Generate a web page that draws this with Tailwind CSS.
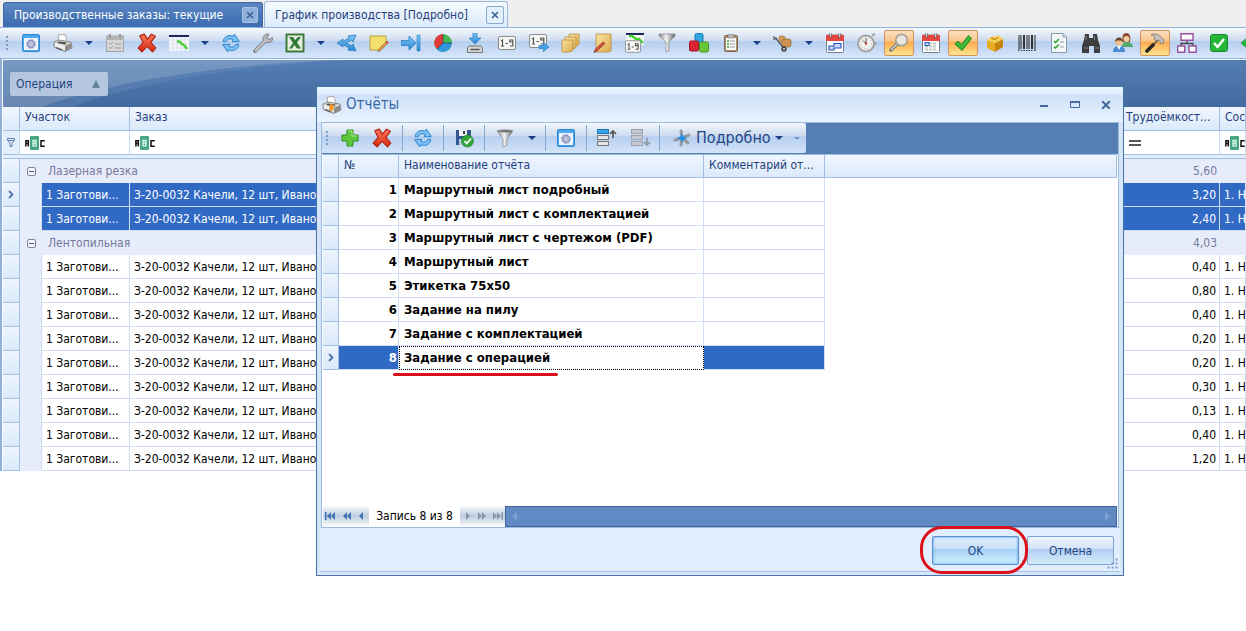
<!DOCTYPE html>
<html lang="ru">
<head>
<meta charset="utf-8">
<title>График производства</title>
<script src="https://cdn.jsdelivr.net/npm/@tailwindcss/browser@4"></script>
</head>
<body class="relative min-h-screen overflow-hidden bg-white font-['DejaVu_Sans_Condensed','DejaVu_Sans',sans-serif] text-[12px] text-black">
<svg class="absolute size-0" aria-hidden="true">
  <defs>
    <linearGradient id="steel" x1="0" x2="1"><stop offset="0" stop-color="#888"/><stop offset=".45" stop-color="#f4f4f4"/><stop offset="1" stop-color="#666"/></linearGradient>
    <linearGradient id="redg" x1="0" y1="0" x2="0" y2="1"><stop offset="0" stop-color="#ff7a5c"/><stop offset="1" stop-color="#d42a10"/></linearGradient>
    <linearGradient id="sky" x1="0" y1="0" x2="0" y2="1"><stop offset="0" stop-color="#7cc8f8"/><stop offset="1" stop-color="#2a86cf"/></linearGradient>
    <linearGradient id="gold" x1="0" y1="0" x2="1" y2="1"><stop offset="0" stop-color="#fbe5a2"/><stop offset="1" stop-color="#dca94e"/></linearGradient>
    <symbol id="settings" viewBox="0 0 18 18"><rect x=".5" y=".5" width="17" height="17" rx="1.5" fill="#4aa8ee" stroke="#2f86cf"/><rect x="2" y="4" width="14" height="12" fill="#eef3fb"/><circle cx="9" cy="10" r="3.600" fill="#b9bedc" stroke="#8d93c0" stroke-width="1.4"/><circle cx="9" cy="10" r="4.500" fill="none" stroke="#8d93c0" stroke-width="1" stroke-dasharray="1.500 2"/><circle cx="9" cy="10" r="1.2" fill="#fff" stroke="#8a90bd" stroke-width=".6"/></symbol>
    <symbol id="printer" viewBox="0 0 20 18"><path d="M5 1l7-.5 2 7-8 1z" fill="#fff" stroke="#999" stroke-width=".8"/><path d="M1 8l5-2 12 2 1 6-7 3.500L1 13z" fill="#d6d6d0" stroke="#777" stroke-width=".8"/><path d="M2 9l10 3v4L2 13z" fill="#f0f0ee"/><path d="M12 12l6.500-3v5L12 17z" fill="#8b8b8d"/><path d="M5.500 7.500l8 1-1 2-8-1.500z" fill="#4a4a4a"/><path d="M4 13l6 2.500-2 1-6-2.500z" fill="#666"/></symbol>
    <symbol id="redx" viewBox="0 0 18 18"><path d="M2.500 2.500l4-1.500 3 4.500L13 1l3.500 2-4 5.500 4.500 5-3 3.500-5-5-4.500 5L1 13.500l4.500-5z" fill="url(#redg)" stroke="#b02010" stroke-width="1" stroke-linejoin="round"/></symbol>
    <symbol id="refresh" viewBox="0 0 18 18"><path d="M2 8C2 3.500 7 1 11 3l1-2 4.500 6.500L10 8l1-2C8 4.500 5.500 5.500 4.500 8z" fill="#7cc0f4" stroke="#2f86cf" stroke-width=".9"/><path d="M16 10c0 4.500-5 7-9 5l-1 2-4.500-6.500L8 10l-1 2c3 1.500 5.500.5 6.500-2z" fill="#7cc0f4" stroke="#2f86cf" stroke-width=".9"/></symbol>
    <symbol id="calred" viewBox="0 0 18 20"><rect x=".5" y="2" width="17" height="17.500" rx="1" fill="#fff" stroke="#777b88"/><path d="M0 2h18v6H0z" fill="#e8453c"/><path d="M4.500 0v5M13.500 0v5" stroke="#666" stroke-width="2"/><path d="M4.500 0v4M13.500 0v4" stroke="#eee" stroke-width=".8"/></symbol>
    <symbol id="tag19" viewBox="0 0 18 14"><rect x=".5" y=".5" width="17" height="13" rx="1.500" fill="#f7f7f5" stroke="#8b8b88"/><path d="M3 5l1.500-1v6M3 10h3M7.500 7.500h2.500M14.800 6h-3V4h3v6h-3" fill="none" stroke="#555" stroke-width="1.200"/></symbol>
    <symbol id="funnel" viewBox="0 0 18 18"><path d="M1 2c3-1.500 13-1.500 16 0l-6 8v6l-4 2v-8z" fill="url(#steel)" stroke="#888" stroke-width=".7"/><ellipse cx="9" cy="2.200" rx="7" ry="1.200" fill="#777"/></symbol>
    <symbol id="abc" viewBox="0 0 20 14"><rect x="5" y="0" width="9" height="14" rx="1" fill="#4aa583"/><path d="M.9 10.500V4.700h2.400v5.800M.9 7.500h2.400M19 5.600V4.700h-3v5.600h3v-.9" fill="none" stroke="#111" stroke-width="1.500"/><path d="M8 4.500h3v5.400H8zM8 7.200h3" fill="none" stroke="#d9fff0" stroke-width="1.300"/></symbol>
    <symbol id="minus" viewBox="0 0 9 9"><rect x=".5" y=".5" width="8" height="8" rx="1.500" fill="#f3f5fb" stroke="#7b86a5"/><path d="M2 4.500h5" stroke="#4d5878"/></symbol>
    <symbol id="down" viewBox="0 0 8 4"><path d="M0 0h8L4 4z" fill="currentColor"/></symbol>
    <symbol id="chev" viewBox="0 0 6 9"><path d="M1 1l3.500 3.500L1 8" fill="none" stroke="#4f73a8" stroke-width="1.800"/></symbol>
    <symbol id="close" viewBox="0 0 8 8"><path d="M1 1l6 6M7 1L1 7" stroke="currentColor" stroke-width="1.600"/></symbol>
  </defs>
</svg>

<nav class="flex h-[27px] items-end bg-[#efefef] pl-[3px]" aria-label="Вкладки">
  <div class="flex h-[25px] w-[260px] items-center justify-between rounded-t-[3px] border border-b-0 border-[#3c67a5] bg-linear-to-b from-[#5b86c2] to-[#3b6bb0] pr-1 pl-[10px] text-white">
    <a href="#orders" class="whitespace-nowrap">Производственные заказы: текущие</a>
    <button class="grid size-4 place-items-center rounded-[2px] border border-[#a9c1e2] bg-[#8fb0dc] text-[#3c5f94]" aria-label="Закрыть"><svg class="size-2"><use href="#close"/></svg></button>
  </div>
  <div class="ml-px flex h-[26px] w-[244px] items-center justify-between rounded-t-[3px] border border-b-0 border-[#9ab8dd] bg-linear-to-b from-[#f5fafe] to-[#dceafb] pr-[3px] pl-[10px] text-[#1f3f7c]">
    <a href="#schedule" class="whitespace-nowrap">График производства [Подробно]</a>
    <button class="grid size-[18px] place-items-center rounded-[2px] border border-[#8fa9cd] bg-[#e4effc] text-[#3c5f94]" aria-label="Закрыть"><svg class="size-2"><use href="#close"/></svg></button>
  </div>
</nav>

<div class="flex h-8 items-center overflow-hidden border-y border-[#8fb3dc] bg-[linear-gradient(#f6f9fd,#cddbee_42%,#b5cef0_46%,#d9e8fb)] text-[#173f86]" role="toolbar">
  <div class="ml-[6px] w-[9px] shrink-0"><svg width="2" height="16" viewBox="0 0 2 16"><path d="M1 1v14" stroke="#7e9bc4" stroke-width="2" stroke-dasharray="2 2"/></svg></div>
  <button class="grid h-7 w-8 shrink-0 place-items-center" aria-label="Настройки"><svg class="size-[18px]"><use href="#settings"/></svg></button>
  <button class="grid h-7 w-8 shrink-0 place-items-center" aria-label="Печать"><svg class="h-[18px] w-5"><use href="#printer"/></svg></button>
  <button class="grid h-7 w-5 shrink-0 place-items-center" aria-label="Ещё"><svg class="h-1 w-2"><use href="#down"/></svg></button>
  <button class="grid h-7 w-8 shrink-0 place-items-center" aria-label="План"><svg width="18" height="18" viewBox="0 0 18 18"><rect x=".5" y="2" width="17" height="15.500" fill="#d6d6d6" stroke="#a5a5a5"/><path d="M0 2h18v4H0z" fill="#b4b4b4"/><path d="M4 0v4M14 0v4" stroke="#999" stroke-width="2"/><path d="M3 9l1.500 1.500L7 8M3 13l1.500 1.500L7 12M9 10h6M9 14h6" stroke="#999" fill="none"/></svg></button>
  <button class="grid h-7 w-8 shrink-0 place-items-center" aria-label="Удалить"><svg class="size-5"><use href="#redx"/></svg></button>
  <button class="grid h-7 w-8 shrink-0 place-items-center" aria-label="Диаграмма"><svg width="20" height="16" viewBox="0 0 20 16"><path d="M0 0h20v16H0z" fill="#f5f6fa"/><path d="M0 5h20M0 9h20M0 13h20M4 2v14M8 2v14M12 2v14M16 2v14" stroke="#d5d8e6" stroke-width=".7"/><path d="M0 0h20v2H0z" fill="#20245c"/><path d="M8 6l3 1 2 2 3 2 2 3" fill="none" stroke="#45d030" stroke-width="2.400"/></svg></button>
  <button class="grid h-7 w-5 shrink-0 place-items-center" aria-label="Ещё"><svg class="h-1 w-2"><use href="#down"/></svg></button>
  <button class="grid h-7 w-8 shrink-0 place-items-center" aria-label="Обновить"><svg class="size-5"><use href="#refresh"/></svg></button>
  <button class="grid h-7 w-8 shrink-0 place-items-center" aria-label="Сервис"><svg width="20" height="20" viewBox="0 0 20 20"><path d="M2 18L12 8" stroke="#777" stroke-width="3.600" stroke-linecap="round"/><path d="M16 1l-2 4 2 1.500 3.500-2c.5 4-2.500 6-6 5L10 7c-.5-4 2-6.500 6-6z" fill="#b5b5b8" stroke="#777" stroke-width=".8"/><path d="M2.500 17.500L12 8" stroke="#ccc" stroke-width="1.800" stroke-linecap="round"/></svg></button>
  <button class="grid h-7 w-8 shrink-0 place-items-center" aria-label="Excel"><svg width="20" height="20" viewBox="0 0 20 20"><path d="M.5.500h19v19H.500z" fill="#3f7a3c"/><path d="M2.500 2.500h15v15h-15z" fill="#e6efdf"/><path d="M4 4h4l2 3 3-3h3l-4 5.500 4 6h-4l-2.500-3.500L7 15.500H4L8 10z" fill="#2f7a35"/></svg></button>
  <button class="grid h-7 w-5 shrink-0 place-items-center" aria-label="Ещё"><svg class="h-1 w-2"><use href="#down"/></svg></button>
  <button class="grid h-7 w-8 shrink-0 place-items-center" aria-label="Разветвить"><svg width="20" height="18" viewBox="0 0 20 18"><path d="M0 9l6-4v2.500L12 4l-1-2 8-1-3 7-1.500-2L9 9l5.500 3 1.500-2 3 7-8-1 1-2-6-3.500V13z" fill="url(#sky)" stroke="#2b7cc0" stroke-width=".8"/></svg></button>
  <button class="grid h-7 w-8 shrink-0 place-items-center" aria-label="Заметка"><svg width="20" height="18" viewBox="0 0 20 18"><path d="M1 2h16v9l-5 5H1z" fill="#f3df6c" stroke="#b9a23e"/><path d="M17 11h-5v5z" fill="#d9bf48"/><path d="M18 7l1.500 1.500-8 8-2.500 1 .8-2.500z" fill="#f0a050" stroke="#8a5a30" stroke-width=".7"/><path d="M18 7l1.500 1.500-1.500 1.500L16.500 8.500z" fill="#e05858"/></svg></button>
  <button class="grid h-7 w-8 shrink-0 place-items-center" aria-label="В конец"><svg width="20" height="18" viewBox="0 0 20 18"><path d="M0 6.500h8V2l7 7-7 7v-4.500H0z" fill="url(#sky)" stroke="#2b7cc0" stroke-width=".8"/><path d="M16 1h3v16h-3z" fill="url(#sky)" stroke="#2b7cc0" stroke-width=".6"/></svg></button>
  <button class="grid h-7 w-8 shrink-0 place-items-center" aria-label="Отчёт"><svg width="18" height="18" viewBox="0 0 18 18"><circle cx="9" cy="9" r="8.700" fill="#40a848"/><path d="M9 9V.3a8.700 8.700 0 0 0-6 14.900z" fill="#e23a36"/><path d="M9 9L3 15.200a8.700 8.700 0 0 0 14.700-6.200z" fill="#2f95dc"/><path d="M9 .3a8.700 8.700 0 0 1 8.700 8.700H9z" fill="#45b851"/><path d="M9 0v9h9M9 9l-6 6" stroke="#235" stroke-width=".6" fill="none"/></svg></button>
  <button class="grid h-7 w-8 shrink-0 place-items-center" aria-label="Загрузить"><svg width="16" height="20" viewBox="0 0 16 20"><path d="M6 0h4v5h4l-6 6-6-6h4z" fill="url(#sky)" stroke="#2b7cc0" stroke-width=".7"/><path d="M2 13h12l1.500 2v4.500H.500V15z" fill="#d5d5d5" stroke="#777"/><path d="M3.500 16.500h9" stroke="#555" stroke-width="1.400"/></svg></button>
  <button class="grid h-7 w-8 shrink-0 place-items-center" aria-label="Нумерация"><svg class="h-[14px] w-[18px]"><use href="#tag19"/></svg></button>
  <button class="grid h-7 w-8 shrink-0 place-items-center" aria-label="Перенумеровать"><svg width="20" height="18" viewBox="0 0 20 18"><use href="#tag19" width="18" height="14"/><path d="M10 11.500h4.500v-3L20 13l-5.500 4.500v-3H10z" fill="#46a0e8" stroke="#2b7cc0" stroke-width=".7"/></svg></button>
  <button class="grid h-7 w-8 shrink-0 place-items-center" aria-label="Папки"><svg width="20" height="20" viewBox="0 0 20 20"><g fill="url(#gold)" stroke="#b88f40" stroke-width=".8"><path d="M8 1h10v10l-2 2H8z"/><path d="M4 4h11v10l-2 2H4z"/><path d="M1 7h11v10l-2 2H1z"/></g></svg></button>
  <button class="grid h-7 w-8 shrink-0 place-items-center" aria-label="Правка"><svg width="20" height="20" viewBox="0 0 20 20"><path d="M3 1h15v17l-3 1H3z" fill="url(#gold)" stroke="#b98c3a" stroke-width=".8"/><path d="M10 9l2 1.500L4 18l-3 1.500 1-3z" fill="#e04a3a" stroke="#6b3a28" stroke-width=".7"/></svg></button>
  <button class="grid h-7 w-8 shrink-0 place-items-center" aria-label="Нумерация плана"><svg width="20" height="20" viewBox="0 0 20 20"><path d="M1 0h18v12H1z" fill="#f5f6fa"/><path d="M1 0h18v2H1z" fill="#20245c"/><path d="M4 3h3l4 3h3l4 4" fill="none" stroke="#45d030" stroke-width="2.400"/><use href="#tag19" y="7" width="16" height="13"/></svg></button>
  <button class="grid h-7 w-8 shrink-0 place-items-center" aria-label="Фильтр"><svg width="18" height="20" viewBox="0 0 18 20"><path d="M1 1h16v2l-6 6v8.500L8 19V9L1 3z" fill="url(#steel)" stroke="#888" stroke-width=".7"/></svg></button>
  <button class="grid h-7 w-8 shrink-0 place-items-center" aria-label="Модули"><svg width="20" height="20" viewBox="0 0 20 20"><rect x="6" y=".5" width="8" height="9" rx="1.500" fill="#2fa4e0" stroke="#1b7fb8"/><rect x=".5" y="8" width="9" height="10" rx="1.500" fill="#dc2436" stroke="#a81424"/><rect x="10.500" y="9" width="9" height="10" rx="1.500" fill="#6cc63c" stroke="#449422"/></svg></button>
  <button class="grid h-7 w-8 shrink-0 place-items-center" aria-label="Буфер"><svg width="14" height="18" viewBox="0 0 14 18"><rect x=".5" y="1.500" width="13" height="16" rx="1" fill="#ab8f6c" stroke="#816848"/><path d="M2 4h10v12H2z" fill="#fafafa"/><path d="M4 0h6v4H4z" fill="#b8b8b8" stroke="#777" stroke-width=".6"/><path d="M3 7h2M3 10h2M3 13h2" stroke="#3a9a3a" stroke-width="1.400"/><path d="M6 7h5M6 10h5M6 13h5" stroke="#999"/></svg></button>
  <button class="grid h-7 w-5 shrink-0 place-items-center" aria-label="Ещё"><svg class="h-1 w-2"><use href="#down"/></svg></button>
  <button class="grid h-7 w-8 shrink-0 place-items-center" aria-label="Склад"><svg width="20" height="18" viewBox="0 0 20 18"><path d="M0 3l3 1.500 8 10" stroke="#555" stroke-width="1.400" fill="none"/><path d="M0 6l4-2" stroke="#555"/><rect x="6" y="2" width="6" height="6" rx="2" fill="#d99a58" stroke="#96683a" stroke-width=".6"/><rect x="9" y="5" width="9" height="8" rx="2.500" fill="#cf924f" stroke="#8a5c2c" stroke-width=".6"/><circle cx="11" cy="15" r="2.700" fill="#444"/><circle cx="11" cy="15" r="1" fill="#ddd"/></svg></button>
  <button class="grid h-7 w-5 shrink-0 place-items-center" aria-label="Ещё"><svg class="h-1 w-2"><use href="#down"/></svg></button>
  <button class="grid h-7 w-8 shrink-0 place-items-center" aria-label="Календарный план"><svg width="18" height="20" viewBox="0 0 18 20"><use href="#calred" width="18" height="20"/><path d="M3 13h5v-2.500h7V15H8v2H3z" fill="#c7d8ff" stroke="#2e55c0" stroke-width="1.200"/></svg></button>
  <button class="grid h-7 w-8 shrink-0 place-items-center" aria-label="Время"><svg width="20" height="20" viewBox="0 0 20 20"><circle cx="9" cy="10.500" r="8" fill="#f1f0ee" stroke="#a3a3a0" stroke-width="2"/><circle cx="9" cy="10.500" r="5.500" fill="none" stroke="#aaa" stroke-dasharray="1 2"/><path d="M9 5.500v5l-3-3" stroke="#555" fill="none"/><circle cx="9" cy="10.500" r="1.200" fill="#c33"/><path d="M15 2.500l3-1.500M18.500 9v3" stroke="#a3a3a0" stroke-width="2"/></svg></button>
  <button class="mx-px grid h-[26px] w-[30px] shrink-0 place-items-center rounded-[2px] border border-[#d3935a] bg-[linear-gradient(#fbe0c0,#fbc58c_42%,#fbab4c_46%,#fde692)]" aria-label="Поиск"><svg width="20" height="20" viewBox="0 0 20 20"><path d="M2 17l6-6" stroke="#777" stroke-width="3.400" stroke-linecap="round"/><path d="M2.500 16.500l5-5" stroke="#ddd" stroke-width="1.200" stroke-linecap="round"/><circle cx="12.500" cy="7" r="5.700" fill="#e9e6dd" stroke="#a5a298" stroke-width="1.700"/></svg></button>
  <button class="grid h-7 w-8 shrink-0 place-items-center" aria-label="Календарь"><svg width="18" height="20" viewBox="0 0 18 20"><use href="#calred" width="18" height="20"/><path d="M3 10.500h12M3 13.500h12M3 16.500h12" stroke="#b9cabd" stroke-width="2" stroke-dasharray="3 1"/><rect x="3" y="9.500" width="4" height="3" fill="#c7d8ff" stroke="#2e55c0"/></svg></button>
  <button class="mx-px grid h-[26px] w-[30px] shrink-0 place-items-center rounded-[2px] border border-[#d3935a] bg-[linear-gradient(#fbe0c0,#fbc58c_42%,#fbab4c_46%,#fde692)]" aria-label="Готово"><svg width="18" height="18" viewBox="0 0 18 18"><path d="M1 10l3-3 3.500 3.500L14.500 1.500l3 3L8 16.500z" fill="#3fb838" stroke="#208a22" stroke-linejoin="round"/></svg></button>
  <button class="grid h-7 w-8 shrink-0 place-items-center" aria-label="Изделие"><svg width="16" height="18" viewBox="0 0 16 18"><path d="M0 6l8 3v9l-8-4z" fill="#e8ad22"/><path d="M16 5l-8 4v9l8-5z" fill="#c8850e"/><path d="M0 6l6-4 3 1 2-2 5 4-8 4z" fill="#f7cf52"/><path d="M4 4l4 1.500L11 3" stroke="#a56c08" fill="none"/></svg></button>
  <button class="grid h-7 w-8 shrink-0 place-items-center" aria-label="Штрихкод"><svg width="18" height="16" viewBox="0 0 18 16"><path d="M1 0v16M3 0v14M6 0v14M9 0v14M11 0v14M14.500 0v14M17 0v16" stroke="#333" stroke-width="1.100"/><path d="M6 0v14M14 0v14" stroke="#333" stroke-width="2"/><path d="M3 15.500h12" stroke="#333" stroke-dasharray="1.500 1"/></svg></button>
  <button class="grid h-7 w-8 shrink-0 place-items-center" aria-label="Список"><svg width="16" height="20" viewBox="0 0 16 20"><path d="M.5.500H12L15.500 4v15.500H.500z" fill="#f4f8fa" stroke="#8a9aa5"/><path d="M12 .5V4h3.500" fill="#d5dee5" stroke="#8a9aa5"/><path d="M3 8l1.500 1.500L8 6M3 13.500L4.500 15 8 11.500" stroke="#3aa53a" stroke-width="1.700" fill="none"/><path d="M9 9h4M9 14h4" stroke="#999"/></svg></button>
  <button class="grid h-7 w-8 shrink-0 place-items-center" aria-label="Найти"><svg width="18" height="19" viewBox="0 0 18 19"><path d="M3 0h4v4h4V0h4l1 6 2 6v7h-6v-7H7v7H0v-7l2-6z" fill="#3d3d40"/><path d="M4 2v4M12.500 2v4M2 14h4M13 14h4" stroke="#85858a"/></svg></button>
  <button class="grid h-7 w-8 shrink-0 place-items-center" aria-label="Сотрудники"><svg width="20" height="20" viewBox="0 0 20 20"><path d="M9 14c0-4 2-5 5-5s6 2 6 5z" fill="#55a86c"/><path d="M9.500 9C9 3 10 0 13.500 0S18 4 17 9z" fill="#8a4a2c"/><circle cx="13.500" cy="6" r="3" fill="#f3cfa5"/><path d="M0 19c0-4 2-6 6-6s6 2 6 6z" fill="#4a8bd8"/><path d="M6 13l-2 0 2 4 2-4z" fill="#fff"/><circle cx="6" cy="9" r="3.600" fill="#eebf8d"/><path d="M2 9c0-3 2-4.500 4-4.500S10 6 10 9L8 7.500H4z" fill="#6e442c"/></svg></button>
  <button class="mx-px grid h-[26px] w-[30px] shrink-0 place-items-center rounded-[2px] border border-[#d3935a] bg-[linear-gradient(#fbe0c0,#fbc58c_42%,#fbab4c_46%,#fde692)]" aria-label="Работы"><svg width="20" height="20" viewBox="0 0 20 20"><path d="M2 18l11-11" stroke="#5f5048" stroke-width="1.600"/><path d="M2 18l6-6" stroke="#2b2523" stroke-width="3.600" stroke-linecap="round"/><path d="M6 2C9 0 13 1 16 4l3 3-1 4-3-1v-2l-2-1-2 1-2-2 1-2C9 3 8 2.500 6 2z" fill="#c5c2bc" stroke="#77736c" stroke-width=".8"/></svg></button>
  <button class="grid h-7 w-8 shrink-0 place-items-center" aria-label="Структура"><svg width="20" height="20" viewBox="0 0 20 20"><path d="M10 7v4M4 13v-2.500h12V13" stroke="#444" fill="none" stroke-width="1.300"/><g fill="#fff" stroke="#97519f" stroke-width="1.400"><path d="M4 .7h12v6.600H4zM.7 13h7v6.200h-7zM12 13h7.200v6.200H12z"/></g></svg></button>
  <button class="grid h-7 w-8 shrink-0 place-items-center" aria-label="Принять"><svg width="18" height="18" viewBox="0 0 18 18"><rect x=".5" y=".5" width="17" height="17" rx="2.500" fill="#27b53a" stroke="#168a28"/><path d="M4 9l3.500 4L14 5" stroke="#fff" stroke-width="2.400" fill="none"/></svg></button>
  <button class="grid h-7 w-8 shrink-0 place-items-center" aria-label="Назад"><svg width="20" height="14" viewBox="0 0 20 14"><path d="M0 7l8-7v4h12v6H8v4z" fill="#27b53a" stroke="#168a28" stroke-width=".6"/></svg></button>
</div>

<main class="border-l-2 border-[#8fb0d8] pl-px">
  <div class="relative flex h-12 items-center overflow-hidden border-t border-white bg-linear-to-b from-[#557eb5] to-[#426a9f] pl-[7px]">
    <svg class="absolute top-0 left-0" width="400" height="48" viewBox="0 0 400 48" aria-hidden="true"><path d="M0 0H340C230 3 110 20 36 48H0z" fill="#fff" opacity=".2"/><path d="M340 0C230 6 130 24 66 48H36C110 20 230 3 340 0z" fill="#fff" opacity=".07"/></svg>
    <button class="relative flex h-6 w-[98px] items-center justify-between rounded-[2px] bg-[#b4c6e0] pr-2 pl-[6px] text-[#24467f]">Операция<svg width="8" height="8" viewBox="0 0 8 8"><path d="M4 0l4 8H0z" fill="#64819f"/></svg></button>
  </div>
  <table class="w-full table-fixed border-separate border-spacing-0">
    <colgroup><col class="w-[17px]"><col class="w-[22px]"><col class="w-[88px]"><col><col class="w-[96px]"><col class="w-[26px]"></colgroup>
    <thead class="text-[#1f3f7c]">
      <tr class="h-6 bg-linear-to-b from-[#f0f6fe] to-[#dae9fb] text-left [&>th]:overflow-hidden [&>th]:border-r [&>th]:border-b [&>th]:border-[#a3bfe2] [&>th]:p-0 [&>th]:pb-1 [&>th]:font-normal [&>th]:whitespace-nowrap">
        <th aria-label="Указатель"></th><th colspan="2"><span class="pl-[5px]">Участок</span></th><th><span class="pl-[5px]">Заказ</span></th><th><span class="pl-[2px]">Трудоёмкост...</span></th><th><span class="pl-[5px]">Состояние</span></th>
      </tr>
      <tr class="h-6 bg-white [&>td]:overflow-hidden [&>td]:border-r [&>td]:border-b [&>td]:border-b-[#a3bfe2] [&>td]:border-r-[#c9dcf2] [&>td]:p-0">
        <td class="bg-[#e2eefc]"><svg class="ml-1" width="8" height="9" viewBox="0 0 8 9"><path d="M.5.500h7v2L5 5v3.500H3V5L.500 2.500z M1 2.500h6" fill="none" stroke="#5f80b4"/></svg></td>
        <td colspan="2"><svg class="ml-[5px] h-[14px] w-5"><use href="#abc"/></svg></td>
        <td><svg class="ml-[5px] h-[14px] w-5"><use href="#abc"/></svg></td>
        <td><svg class="ml-[5px]" width="12" height="6" viewBox="0 0 12 6"><path d="M0 1h12M0 5h12" stroke="#222" stroke-width="1.500"/></svg></td>
        <td><svg class="ml-[5px] h-[14px] w-5"><use href="#abc"/></svg></td>
      </tr>
      <tr class="h-1"><td colspan="6" class="border-b border-[#a3bfe2] bg-[#e2eefc] p-0"></td></tr>
    </thead>
    <tbody id="jobs" class="[&_td]:h-6 [&_td]:overflow-hidden [&_td]:whitespace-nowrap [&_td]:p-0"></tbody>
  </table>
</main>

<section role="dialog" aria-labelledby="dlg-title" class="absolute top-[86px] right-[122px] left-[316px] flex h-[490px] flex-col border border-[#4672a8] bg-[#d5e6fa]">
  <header class="flex h-[35px] shrink-0 items-center bg-[linear-gradient(#e9f4fe,#dfedfc_20%,#cfe1f9_24%,#e8f3fe)] pr-3 pl-[5px]">
    <svg width="20" height="18" viewBox="0 0 20 18"><use href="#printer" width="20" height="18"/><path d="M8 8l4 1-1 6-4-1z" fill="#f59a28"/></svg>
    <h2 id="dlg-title" class="ml-1 flex-1 text-[15px] text-[#3a68a6]">Отчёты</h2>
    <div class="flex items-center gap-5 text-[#44699c]">
      <button class="grid h-4 w-[10px] place-items-center" aria-label="Свернуть"><svg width="8" height="8" viewBox="0 0 8 8"><path d="M0 5h8" stroke="currentColor" stroke-width="2"/></svg></button>
      <button class="grid h-4 w-3 place-items-center" aria-label="Развернуть"><svg width="10" height="8" viewBox="0 0 10 8"><path d="M.5.500h9v6h-9z" fill="none" stroke="currentColor"/><path d="M0 1h10" stroke="currentColor" stroke-width="2"/></svg></button>
      <button class="grid h-4 w-[10px] place-items-center" aria-label="Закрыть"><svg class="size-[10px]"><use href="#close"/></svg></button>
    </div>
  </header>
  <div class="mx-1 flex min-h-0 flex-1 flex-col border border-[#9cb9df] bg-white">
    <div class="h-[31px] shrink-0 bg-[#557eb4]">
      <div class="flex h-[30px] w-[484px] items-center rounded-r-[2px] bg-[linear-gradient(#f3f7fc,#cddbee_42%,#b5cef0_46%,#d5e5f9)] text-[#173f86]" role="toolbar">
        <div class="w-[12px] shrink-0 pl-1"><svg width="2" height="16" viewBox="0 0 2 16"><path d="M1 1v14" stroke="#7e9bc4" stroke-width="2" stroke-dasharray="2 2"/></svg></div>
        <button class="grid h-6 w-8 shrink-0 place-items-center" aria-label="Добавить"><svg width="18" height="18" viewBox="0 0 18 18"><path d="M6 1h6v5h5v6h-5v5H6v-5H1V6h5z" fill="#5cc83c" stroke="#2f8f22"/><path d="M7 2h4v5h5" fill="none" stroke="#a9ec8c"/></svg></button>
        <button class="grid h-6 w-9 shrink-0 place-items-center pr-1" aria-label="Удалить"><svg class="size-5"><use href="#redx"/></svg></button>
        <button class="grid h-[26px] w-[41px] shrink-0 place-items-center border-l border-[#86a5d0]" aria-label="Обновить"><svg class="size-5"><use href="#refresh"/></svg></button>
        <button class="grid h-[26px] w-[41px] shrink-0 place-items-center border-l border-[#86a5d0]" aria-label="Сохранить"><svg width="20" height="20" viewBox="0 0 20 20"><path d="M2 2h15v15H2z" fill="#31588f"/><path d="M5 2h8v6H5z" fill="#f3f3f3"/><path d="M5 11h8v6H5z" fill="#b9c7dc"/><path d="M10 3v3" stroke="#345" stroke-width="2"/><circle cx="13.500" cy="13" r="6" fill="#2fa838" stroke="#1d7d28" stroke-width=".6"/><path d="M10.500 13l2.200 2.500L17 10.500" stroke="#fff" stroke-width="1.800" fill="none"/></svg></button>
        <button class="grid h-[26px] w-[41px] shrink-0 place-items-center border-l border-[#86a5d0]" aria-label="Фильтр"><svg class="size-[18px]"><use href="#funnel"/></svg></button>
        <button class="grid h-[26px] w-5 shrink-0 place-items-center pr-[6px]" aria-label="Ещё"><svg class="h-1 w-2"><use href="#down"/></svg></button>
        <button class="grid h-[26px] w-[41px] shrink-0 place-items-center border-l border-[#86a5d0]" aria-label="Настройки"><svg class="size-[18px]"><use href="#settings"/></svg></button>
        <button class="grid h-[26px] w-[41px] shrink-0 place-items-center border-l border-[#86a5d0]" aria-label="Выше"><svg width="20" height="18" viewBox="0 0 20 18"><g fill="#e4e4e4" stroke="#777"><rect x=".5" y=".5" width="11" height="4" fill="#35a5ee" stroke="#2272ae"/><rect x=".5" y="6.500" width="11" height="4"/><rect x=".5" y="12.500" width="11" height="4"/></g><path d="M16 9V2M13 5l3-3 3 3" stroke="#555" stroke-width="1.700" fill="none"/></svg></button>
        <button class="grid h-[26px] w-8 shrink-0 place-items-center pr-1" aria-label="Ниже"><svg width="20" height="18" viewBox="0 0 20 18"><g fill="#c6cad0" stroke="#9ca3ae"><rect x=".5" y=".5" width="11" height="4"/><rect x=".5" y="6.500" width="11" height="4"/><rect x=".5" y="12.500" width="11" height="4"/></g><path d="M16 9v7M13 13l3 3 3-3" stroke="#8f98a6" stroke-width="1.700" fill="none"/></svg></button>
        <button class="flex h-[26px] shrink-0 items-center gap-1 border-l border-[#86a5d0] pl-3 text-[16px] text-[#1f4784]"><svg width="20" height="18" viewBox="0 0 20 18"><g stroke="#96999f" stroke-width="3" stroke-linecap="round"><path d="M10 9L9 2M10 9l7-3M10 9l6 5M10 9l-1 7M10 9l-7 2"/></g><path d="M10 4.500l1.500 3L15 9l-3 1.500-2 3-1.500-3L5 9l3.500-1.500z" fill="#2490e8"/></svg>Подробно<svg class="h-1 w-2"><use href="#down"/></svg></button>
        <svg class="mr-[6px] ml-auto h-[3px] w-[6px] text-[#7393c0]"><use href="#down"/></svg>
      </div>
    </div>
    <div class="mx-px flex-1 border-t border-[#9cb9df]">
      <table class="w-full table-fixed border-separate border-spacing-0">
        <colgroup><col class="w-[16px]"><col class="w-[60px]"><col class="w-[305px]"><col class="w-[121px]"><col></colgroup>
        <thead class="text-[#1f3f7c]">
          <tr class="h-[23px] bg-linear-to-b from-[#f0f6fe] to-[#dae9fb] text-left [&>th]:overflow-hidden [&>th]:border-r [&>th]:border-b [&>th]:border-[#a3bfe2] [&>th]:p-0 [&>th]:pb-[2px] [&>th]:pl-[5px] [&>th]:font-normal [&>th]:whitespace-nowrap">
            <th aria-label="Указатель"></th><th>№</th><th>Наименование отчёта</th><th>Комментарий от...</th><th aria-label="Пусто"></th>
          </tr>
        </thead>
        <tbody id="reports" class="[&_td]:h-6 [&_td]:p-0"></tbody>
      </table>
    </div>
    <div class="mx-px flex h-[22px] shrink-0 items-center bg-linear-to-b from-white via-[#bdccdf] to-white text-[#4272b4]">
      <div class="flex h-full w-[46px] items-center justify-between px-[2px]">
        <button aria-label="Первая"><svg width="10" height="8" viewBox="0 0 10 8"><path d="M0 0h1.500v8H0zM6 0v8L2 4zM10 0v8L6 4z" fill="currentColor"/></svg></button>
        <button aria-label="Предыдущая страница"><svg width="8" height="8" viewBox="0 0 8 8"><path d="M4 0v8L0 4zM8 0v8L4 4z" fill="currentColor"/></svg></button>
        <button class="pr-1" aria-label="Предыдущая"><svg width="4" height="8" viewBox="0 0 4 8"><path d="M4 0v8L0 4z" fill="currentColor"/></svg></button>
      </div>
      <div class="flex h-full w-[91px] items-center justify-center bg-white whitespace-nowrap text-black">Запись 8 из 8</div>
      <div class="flex h-full w-[45px] items-center justify-between pr-[2px] pl-[6px] text-[#8e97a5]">
        <button aria-label="Следующая"><svg width="4" height="8" viewBox="0 0 4 8"><path d="M0 0v8l4-4z" fill="currentColor"/></svg></button>
        <button aria-label="Следующая страница"><svg width="8" height="8" viewBox="0 0 8 8"><path d="M0 0v8l4-4zM4 0v8l4-4z" fill="currentColor"/></svg></button>
        <button aria-label="Последняя"><svg width="10" height="8" viewBox="0 0 10 8"><path d="M0 0v8l4-4zM4 0v8l4-4zM8.500 0H10v8H8.500z" fill="currentColor"/></svg></button>
      </div>
      <div class="flex h-[21px] flex-1 items-center justify-between border border-[#3f649d] bg-[#6189c3] px-[6px] text-[#7ca0d3]">
        <svg width="5" height="9" viewBox="0 0 5 9"><path d="M5 0v9L0 4.500z" fill="currentColor"/></svg>
        <svg width="5" height="9" viewBox="0 0 5 9"><path d="M0 0v9l5-4.500z" fill="currentColor"/></svg>
      </div>
    </div>
  </div>
  <footer class="relative mx-[3px] mb-[3px] flex h-[44px] shrink-0 justify-end gap-2 border-b border-[#a9c3e6] bg-[#e2edfd] pt-2 pr-[6px] text-[#1f4784]">
    <button class="h-[29px] w-[87px] rounded-[2px] border border-[#5c8fd0] bg-[linear-gradient(#e0effc,#c9e1f9_42%,#a6cff5_46%,#cff3fe)] shadow-[inset_0_0_3px_#4f98e8]">OK</button>
    <button class="h-[29px] w-[87px] rounded-[2px] border border-[#7ea3d4] bg-[linear-gradient(#f0f6fd,#d5e4f7_42%,#b3cef0_46%,#d3edfb)]">Отмена</button>
    <svg class="absolute right-[2px] bottom-[2px]" width="11" height="11" viewBox="0 0 11 11"><path d="M8.500.500h2v2h-2zM4.500 4.500h2v2h-2zM8.500 4.500h2v2h-2zM.500 8.500h2v2h-2zM4.500 8.500h2v2h-2zM8.500 8.500h2v2h-2z" fill="#7d9fce"/></svg>
    <div class="pointer-events-none absolute top-[-2px] right-[92px] h-[48px] w-[108px] rounded-[22px] border-[3px] border-[#dc1018]"></div>
  </footer>
  <div class="pointer-events-none absolute top-[286px] left-[76px] h-[3px] w-[165px] rounded-full bg-[#dc1018]"></div>
</section>

<script>
const ind = mark => `<td class="border-r border-b border-[#a3bfe2] bg-linear-to-b from-[#eef5fe] to-[#dae9fb]">${mark ? '<svg class="mx-auto h-[9px] w-[6px]"><use href="#chev"/></svg>' : ''}</td>`;
const group = (name, sum) => `<tr class="bg-[#e6ecf9] text-[#77789f]">${ind(false)}<td colspan="3"><div class="flex items-center gap-3 pl-[7px]"><svg class="size-[9px]"><use href="#minus"/></svg>${name}</div></td><td class="text-right"><span class="pr-[3px]">${sum}</span></td><td></td></tr>`;
const row = (time, selected, current) => `<tr class="${selected ? 'bg-[#316ac5] text-white' : 'bg-white'} [&>td+td+td]:border-r [&>td+td+td]:border-b [&>td+td+td]:border-[#cfdff1]">${ind(current)}<td class="border-r border-[#cfdff1] bg-[#e6ecf9]"></td><td><span class="pl-1">1 Заготови...</span></td><td><span class="pl-1">З-20-0032 Качели, 12 шт, Иванов</span></td><td class="text-right"><span class="pr-[3px]">${time}</span></td><td><span class="pl-1">1. Не начато</span></td></tr>`;
document.getElementById('jobs').innerHTML =
  group('Лазерная резка', '5,60') + row('3,20', true, true) + row('2,40', true, false) + group('Лентопильная', '4,03') +
  ['0,40', '0,80', '0,40', '0,20', '0,20', '0,30', '0,13', '0,40', '1,20'].map(t => row(t, false, false)).join('');

document.getElementById('reports').innerHTML =
  ['Маршрутный лист подробный', 'Маршрутный лист с комплектацией', 'Маршрутный лист с чертежом (PDF)', 'Маршрутный лист', 'Этикетка 75х50', 'Задание на пилу', 'Задание с комплектацией', 'Задание с операцией'].map((name, i) => {
    const sel = i === 7;
    const fill = sel ? 'bg-[#316ac5] text-white' : 'bg-white';
    return `<tr class="text-[13px]">${ind(sel)}<td class="border-r border-b border-[#cfdff1] text-right font-bold ${fill}"><span class="pr-px">${i + 1}</span></td><td class="${sel ? 'border border-dotted border-black' : 'border-r border-b border-[#cfdff1]'} bg-white font-bold"><span class="${sel ? 'pl-1' : 'pl-[5px]'}">${name}</span></td><td class="border-r border-b border-[#cfdff1] ${fill}"></td><td></td></tr>`;
  }).join('');
</script>
</body>
</html>
